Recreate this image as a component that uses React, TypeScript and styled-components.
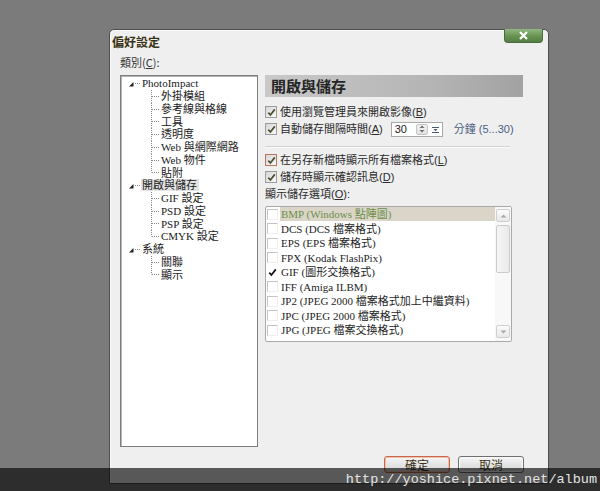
import React from "react";
import styled, { createGlobalStyle } from "styled-components";

const CJK = `"Noto Sans CJK TC", sans-serif`;
const SERIF = `"Liberation Serif", "Noto Sans CJK TC", serif`;
const SANS = `"Liberation Sans", "Noto Sans CJK TC", sans-serif`;

const GlobalStyle = createGlobalStyle`
  html, body { margin: 0; padding: 0; background: #7b7b7b; }
  body { font-family: ${SANS}; }
`;

const Page = styled.div`
  position: relative;
  width: 600px;
  height: 491px;
  overflow: hidden;
  background: #7b7b7b;
  padding: 29px 0 0 109px;
  box-sizing: border-box;
`;

const Dialog = styled.div`
  width: 440px;
  box-sizing: border-box;
  border: 1px solid #4e4e4e;
  border-radius: 5px 5px 0 0;
  background: #efefef;
  box-shadow: inset 1px 1px 0 #fafafa;
  display: flex;
  flex-direction: column;
  padding-bottom: 10px;
`;

const TitleBar = styled.div`
  height: 26px;
  display: flex;
  justify-content: space-between;
  align-items: flex-start;
`;

const Title = styled.div`
  margin: 5px 0 0 2px;
  font: bold 12px/13px ${CJK};
  color: #3a3214;
`;

const CloseButton = styled.div`
  width: 39px;
  height: 14px;
  margin: -1px 5px 0 0;
  box-sizing: border-box;
  border: 1px solid #4a6a3c;
  border-top: none;
  border-radius: 0 0 4px 4px;
  background: linear-gradient(#93b682, #66944f 55%, #567f44);
  display: flex;
  align-items: center;
  justify-content: center;
`;

const Body = styled.div`
  display: grid;
  grid-template-columns: 138px 258px;
  grid-template-rows: 19px 372px;
  column-gap: 7px;
  padding-left: 10px;
`;

const CategoryLabel = styled.div`
  grid-column: 1;
  grid-row: 1;
  font: 11px/13px ${CJK};
  color: #333;
`;

const Tree = styled.div`
  grid-column: 1;
  grid-row: 2;
  background: #fff;
  border: 1px solid #7e7e7e;
  box-shadow: inset 1px 1px 0 #b4b4b4;
  padding-top: 1px;
  box-sizing: border-box;
`;

const TreeRow = styled.div`
  display: flex;
  align-items: center;
  height: 12.75px;
`;

const TreeLabel = styled.span<{ $selected?: boolean }>`
  font: 11px/12px ${SERIF};
  color: #1a1a1a;
  white-space: nowrap;
  padding: 0 2px 0 1px;
  margin-left: -1px;
  background: ${(p) => (p.$selected ? "#e3e3e3" : "transparent")};
`;

const Panel = styled.div`
  grid-column: 2;
  grid-row: 2;
  display: flex;
  flex-direction: column;
`;

const PanelHeader = styled.div`
  height: 22px;
  display: flex;
  align-items: center;
  padding-left: 6px;
  background: linear-gradient(to right, #c9c9c9, #b4b4b4 65%, #a2a2a2);
  font: bold 15px/22px ${CJK};
  color: #262626;
`;

const OptionRow = styled.div<{ $mt: number; $h?: number }>`
  display: flex;
  align-items: center;
  height: ${(p) => p.$h ?? 14}px;
  margin-top: ${(p) => p.$mt}px;
  font: 11px/14px ${SANS};
  color: #2a2a2a;
  white-space: nowrap;
`;

const Box = styled.span<{ $hot?: boolean }>`
  width: 12px;
  height: 12px;
  box-sizing: border-box;
  margin-right: 3px;
  flex: none;
  border: 1px solid ${(p) => (p.$hot ? "#b87658" : "#9c9c9c")};
  background: linear-gradient(135deg, #d6d6d6, #f9f9f9);
  display: flex;
  align-items: center;
  justify-content: center;
`;

const Separator = styled.div`
  margin: 9px 13px 0 0;
  height: 1px;
  background: #d2d2d2;
  border-bottom: 1px solid #fbfbfb;
`;

const Spinner = styled.div`
  display: flex;
  align-items: center;
  width: 52px;
  height: 15px;
  box-sizing: border-box;
  margin-left: 8px;
  border: 1px solid #a9a9a9;
  background: #fff;
  padding: 0 2px 0 1px;
`;

const SpinValue = styled.span`
  flex: 1;
  padding-left: 2px;
  font: 11px/13px ${SANS};
  color: #222;
`;

const SpinButton = styled.span`
  width: 12px;
  height: 11px;
  box-sizing: border-box;
  border: 1px solid #c6c6c6;
  border-radius: 2px;
  background: linear-gradient(#f2f2f2, #e0e0e0);
  display: flex;
  align-items: center;
  justify-content: center;
  margin-right: 3px;
`;

const Units = styled.span`
  margin-left: 11px;
  font: 11px/14px ${SANS};
  color: #4b6183;
`;

const ListBox = styled.div`
  height: 136px;
  margin: 5px 11px 0 0;
  box-sizing: border-box;
  border: 1px solid #a9a9a9;
  border-radius: 2px;
  background: #fff;
  display: flex;
`;

const ListRows = styled.div`
  flex: 1;
  display: flex;
  flex-direction: column;
`;

const ListRow = styled.div`
  display: flex;
  align-items: center;
  height: 14.5px;
  padding-left: 1px;
`;

const ListCheck = styled.span`
  width: 11px;
  height: 11px;
  box-sizing: border-box;
  flex: none;
  margin-right: 2px;
  border-top: 1px solid #c4c4c4;
  border-left: 1px solid #c4c4c4;
  border-right: 1px solid #efefef;
  border-bottom: 1px solid #efefef;
  display: flex;
  align-items: center;
  justify-content: center;
`;

const ListCheckMark = styled.span`
  width: 11px;
  height: 11px;
  flex: none;
  margin-right: 2px;
  display: flex;
  align-items: center;
  justify-content: center;
`;

const ListText = styled.span<{ $selected?: boolean }>`
  flex: 1;
  font: 11px/14px ${SERIF};
  white-space: nowrap;
  color: ${(p) => (p.$selected ? "#6b8f4b" : "#1e1e1e")};
  background: ${(p) => (p.$selected ? "#dbd5c9" : "transparent")};
  padding-left: 1px;
`;

const ScrollBar = styled.div`
  width: 16px;
  display: flex;
  flex-direction: column;
  align-items: center;
  padding: 2px 0 3px;
  box-sizing: border-box;
  background: #f8f8f8;
`;

const ScrollBtn = styled.div`
  width: 14px;
  height: 13px;
  box-sizing: border-box;
  border: 1px solid #cfcfcf;
  border-radius: 2px;
  background: linear-gradient(#fbfbfb, #e8e8e8);
  display: flex;
  align-items: center;
  justify-content: center;
`;

const Thumb = styled.div`
  width: 14px;
  height: 48px;
  margin-top: 3px;
  box-sizing: border-box;
  border: 1px solid #cbcbcb;
  border-radius: 2px;
  background: linear-gradient(to right, #f6f6f6, #e9e9e9);
`;

const Track = styled.div`
  flex: 1;
`;

const Footer = styled.div`
  display: flex;
  justify-content: flex-end;
  gap: 8px;
  margin-top: 9px;
  padding-right: 24px;
`;

const DialogButton = styled.div<{ $default?: boolean }>`
  width: 66px;
  height: 17px;
  box-sizing: border-box;
  border: 1px solid ${(p) => (p.$default ? "#c8674a" : "#6f6f6f")};
  border-radius: 3px;
  background: linear-gradient(#f6f6f6, #e4e4e4 50%, #d6d6d6);
  box-shadow: inset 0 0 0 1px ${(p) => (p.$default ? "#f0c0a8" : "#fafafa")};
  display: flex;
  align-items: center;
  justify-content: center;
  font: 12px/15px ${CJK};
  color: #3a3214;
`;

const Watermark = styled.div`
  position: absolute;
  left: 0;
  right: 0;
  bottom: 0;
  height: 23px;
  background: rgba(0, 0, 0, 0.63);
  display: flex;
  align-items: center;
  justify-content: flex-end;
  padding-right: 3px;
  font: 13.5px/23px "Liberation Mono", monospace;
  color: #e4e4e4;
`;

const Check = ({ color = "#4d4b30" }: { color?: string }) => (
  <svg width="9" height="9" viewBox="0 0 9 9">
    <path d="M1.3 4.6 L3.4 7 L7.8 1.4" fill="none" stroke={color} strokeWidth="1.7" />
  </svg>
);

type Node = { label: string; level: 0 | 1; last?: boolean; selected?: boolean };

const tree: Node[] = [
  { label: "PhotoImpact", level: 0 },
  { label: "外掛模組", level: 1 },
  { label: "參考線與格線", level: 1 },
  { label: "工具", level: 1 },
  { label: "透明度", level: 1 },
  { label: "Web 與網際網路", level: 1 },
  { label: "Web 物件", level: 1 },
  { label: "貼附", level: 1, last: true },
  { label: "開啟與儲存", level: 0, selected: true },
  { label: "GIF 設定", level: 1 },
  { label: "PSD 設定", level: 1 },
  { label: "PSP 設定", level: 1 },
  { label: "CMYK 設定", level: 1, last: true },
  { label: "系統", level: 0 },
  { label: "關聯", level: 1 },
  { label: "顯示", level: 1, last: true },
];

const RootConnector = () => (
  <svg width="21" height="12.75" viewBox="0 0 21 12.75" style={{ flex: "none" }}>
    <polygon points="8,9.5 12.5,5 12.5,9.5" fill="#222" />
    <line x1="14" y1="6.5" x2="20" y2="6.5" stroke="#8a8a8a" strokeDasharray="1 1" />
  </svg>
);

const ChildConnector = ({ last }: { last?: boolean }) => (
  <svg width="40" height="12.75" viewBox="0 0 40 12.75" style={{ flex: "none" }}>
    <line x1="30.5" y1="0" x2="30.5" y2={last ? 6.5 : 12.75} stroke="#8a8a8a" strokeDasharray="1 1" />
    <line x1="31" y1="6.5" x2="38" y2="6.5" stroke="#8a8a8a" strokeDasharray="1 1" />
  </svg>
);

const formats = [
  { t: "BMP (Windows 點陣圖)", sel: true },
  { t: "DCS (DCS 檔案格式)" },
  { t: "EPS (EPS 檔案格式)" },
  { t: "FPX (Kodak FlashPix)" },
  { t: "GIF (圖形交換格式)", checked: true },
  { t: "IFF (Amiga ILBM)" },
  { t: "JP2 (JPEG 2000 檔案格式加上中繼資料)" },
  { t: "JPC (JPEG 2000 檔案格式)" },
  { t: "JPG (JPEG 檔案交換格式)" },
];

export default function App() {
  return (
    <Page>
      <GlobalStyle />
      <Dialog>
        <TitleBar>
          <Title>偏好設定</Title>
          <CloseButton>
            <svg width="11" height="9" viewBox="0 0 11 9">
              <path d="M2 1 L9 8 M9 1 L2 8" stroke="#fff" strokeWidth="2.2" />
            </svg>
          </CloseButton>
        </TitleBar>
        <Body>
          <CategoryLabel>
            類別(<u>C</u>):
          </CategoryLabel>
          <Tree>
            {tree.map((n, i) => (
              <TreeRow key={i}>
                {n.level === 0 ? <RootConnector /> : <ChildConnector last={n.last} />}
                <TreeLabel $selected={n.selected}>{n.label}</TreeLabel>
              </TreeRow>
            ))}
          </Tree>
          <Panel>
            <PanelHeader>開啟與儲存</PanelHeader>
            <OptionRow $mt={8}>
              <Box>
                <Check />
              </Box>
              使用瀏覽管理員來開啟影像(<u>B</u>)
            </OptionRow>
            <OptionRow $mt={2} $h={16}>
              <Box>
                <Check />
              </Box>
              自動儲存間隔時間(<u>A</u>)
              <Spinner>
                <SpinValue>30</SpinValue>
                <SpinButton>
                  <svg width="6" height="8" viewBox="0 0 6 8">
                    <polygon points="3,0.5 5.5,3 0.5,3" fill="#707070" />
                    <polygon points="0.5,5 5.5,5 3,7.5" fill="#707070" />
                  </svg>
                </SpinButton>
                <svg width="9" height="9" viewBox="0 0 9 9">
                  <line x1="1" y1="2.5" x2="8" y2="2.5" stroke="#4a5878" strokeWidth="1" />
                  <line x1="1" y1="7.5" x2="8" y2="7.5" stroke="#4a5878" strokeWidth="1" />
                  <polygon points="2.5,4 6.5,4 4.5,6.3" fill="#4a5878" />
                </svg>
              </Spinner>
              <Units>分鐘 (5...30)</Units>
            </OptionRow>
            <Separator />
            <OptionRow $mt={5}>
              <Box $hot>
                <Check />
              </Box>
              在另存新檔時顯示所有檔案格式(<u>L</u>)
            </OptionRow>
            <OptionRow $mt={3}>
              <Box>
                <Check />
              </Box>
              儲存時顯示確認訊息(<u>D</u>)
            </OptionRow>
            <OptionRow $mt={3}>
              顯示儲存選項(<u>O</u>):
            </OptionRow>
            <ListBox>
              <ListRows>
                {formats.map((f, i) => (
                  <ListRow key={i}>
                    {f.checked ? (
                      <ListCheckMark>
                        <Check color="#111" />
                      </ListCheckMark>
                    ) : (
                      <ListCheck />
                    )}
                    <ListText $selected={f.sel}>{f.t}</ListText>
                  </ListRow>
                ))}
              </ListRows>
              <ScrollBar>
                <ScrollBtn>
                  <svg width="7" height="4" viewBox="0 0 7 4">
                    <polygon points="0.5,3.5 6.5,3.5 3.5,0.5" fill="#a8a8a8" />
                  </svg>
                </ScrollBtn>
                <Thumb />
                <Track />
                <ScrollBtn>
                  <svg width="7" height="4" viewBox="0 0 7 4">
                    <polygon points="0.5,0.5 6.5,0.5 3.5,3.5" fill="#a8a8a8" />
                  </svg>
                </ScrollBtn>
              </ScrollBar>
            </ListBox>
          </Panel>
        </Body>
        <Footer>
          <DialogButton $default>確定</DialogButton>
          <DialogButton>取消</DialogButton>
        </Footer>
      </Dialog>
      <Watermark>http://yoshice.pixnet.net/album</Watermark>
    </Page>
  );
}
